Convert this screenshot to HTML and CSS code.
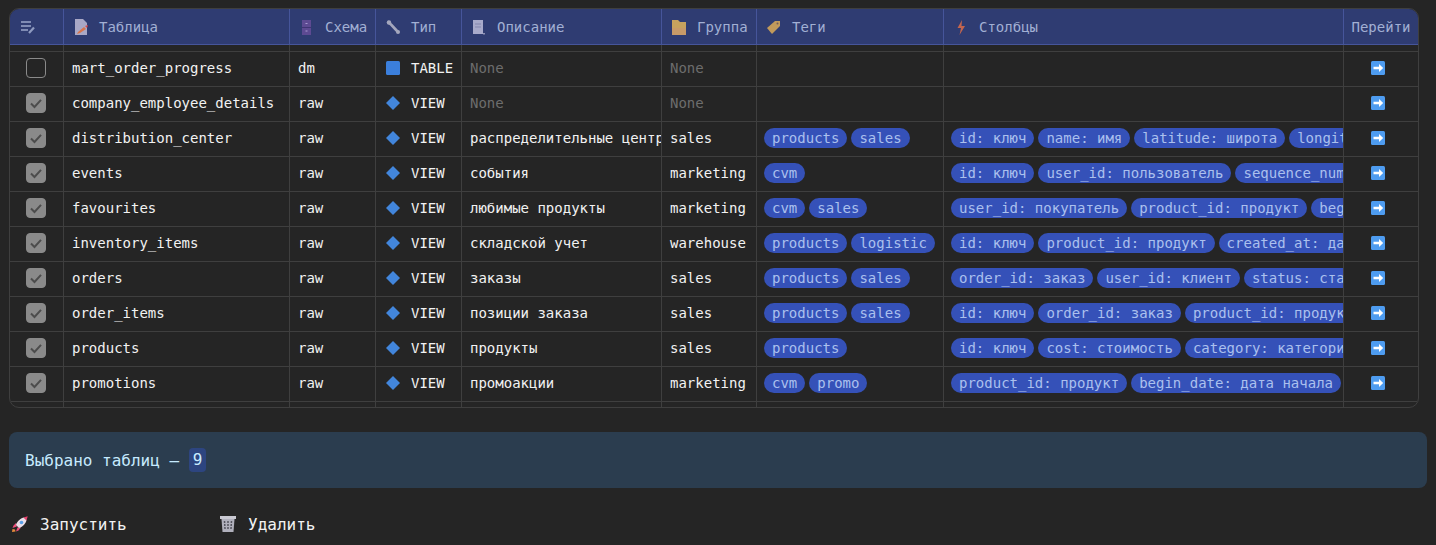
FILE: index.html
```html
<!DOCTYPE html>
<html lang="ru">
<head>
<meta charset="utf-8">
<title>Таблицы</title>
<link rel="stylesheet" href="styles.css">
</head>
<body>
<svg class="sprite" aria-hidden="true">
  <symbol id="i-table" viewBox="0 0 14 14"><rect width="14" height="14" rx="1.5" fill="#3b7fdc"/></symbol>
  <symbol id="i-view" viewBox="0 0 14 14"><path d="M7 0 14 7 7 14 0 7Z" fill="#4286dc"/></symbol>
  <symbol id="i-go" viewBox="0 0 14 14"><rect width="14" height="14" rx="1.5" fill="#4e9cf0"/><path d="M2.500 5.800h5.500V3l4.200 4-4.200 4V8.200H2.500Z" fill="#fff"/></symbol>
  <symbol id="i-check" viewBox="0 0 20 20"><path d="M5 10.500 8.500 14 15 6.800" fill="none" stroke="#4c4c4c" stroke-width="2"/></symbol>
</svg>
<main class="page">
  <section class="table">
    <div class="row head">
      <div class="cell"><svg class="ic-list" width="16" height="14" viewBox="0 0 16 14"><path d="M1 2h10M1 6h10M1 10h7" stroke="#7f8bb4" stroke-width="2"/><path d="M9 13l5-5.500" stroke="#8f9bc0" stroke-width="2.200"/></svg></div>
      <div class="cell"><svg class="ic" viewBox="0 0 27 18"><path d="M3 1h8l4 4v12H3Z" fill="#a9a8c6"/><path d="M6 14l6-5 2 2-6 4-3 1Z" fill="#d9754c"/><path d="M13 8l3-1-1 3Z" fill="#d84a4a"/></svg>Таблица</div>
      <div class="cell"><svg class="ic" viewBox="0 0 27 18"><rect x="4" y="2" width="9" height="15" fill="#5d4a92"/><path d="M4 9.500h9" stroke="#3f3473"/><path d="M7.500 5.500h2M7.500 13h2" stroke="#a99bd0"/></svg>Схема</div>
      <div class="cell"><svg class="ic" viewBox="0 0 27 18"><path d="M3.500 3.500l4 3.500 6 6.500" stroke="#a4a7bd" stroke-width="2.600" fill="none"/><circle cx="5" cy="4.500" r="2.200" fill="#a4a7bd"/><circle cx="14" cy="14" r="2" fill="#a4a7bd"/></svg>Тип</div>
      <div class="cell"><svg class="ic" viewBox="0 0 27 18"><path d="M3 2h10v14h-10Z" fill="#a8aacb"/><path d="M13 15h2v1.500h-2Z" fill="#8d90b4"/><path d="M5 6h6M5 9h6" stroke="#8386ad"/></svg>Описание</div>
      <div class="cell"><svg class="ic" viewBox="0 0 27 18"><path d="M2 2h6l2 2h6v13H2Z" fill="#c6a25e"/><path d="M2 10h14v7H2Z" fill="#c79a68"/></svg>Группа</div>
      <div class="cell"><svg class="ic" viewBox="0 0 27 18"><path d="M2 10 10 3h5v5l-8 8Z" fill="#c29a5b"/><circle cx="12.500" cy="5.500" r="1" fill="#6f5a5e"/></svg>Теги</div>
      <div class="cell"><svg class="ic" viewBox="0 0 27 18"><path d="M10 2 5.500 10H9l-1.500 7L13 8H9.500Z" fill="#c2654f"/></svg>Столбцы</div>
      <div class="cell last center">Перейти</div>
    </div>
    <div class="row spacer">
      <div class="cell"></div><div class="cell"></div><div class="cell"></div><div class="cell"></div><div class="cell"></div><div class="cell"></div><div class="cell"></div><div class="cell"></div><div class="cell last"></div>
    </div>

    <div class="row">
      <div class="cell center"><span class="box"></span></div>
      <div class="cell">mart_order_progress</div>
      <div class="cell">dm</div>
      <div class="cell"><svg class="kind"><use href="#i-table"/></svg>TABLE</div>
      <div class="cell none">None</div>
      <div class="cell none">None</div>
      <div class="cell"></div>
      <div class="cell"></div>
      <div class="cell last"><svg class="go"><use href="#i-go"/></svg></div>
    </div>
    <div class="row">
      <div class="cell center"><span class="box on"><svg class="tick"><use href="#i-check"/></svg></span></div>
      <div class="cell">company_employee_details</div>
      <div class="cell">raw</div>
      <div class="cell"><svg class="kind"><use href="#i-view"/></svg>VIEW</div>
      <div class="cell none">None</div>
      <div class="cell none">None</div>
      <div class="cell"></div>
      <div class="cell"></div>
      <div class="cell last"><svg class="go"><use href="#i-go"/></svg></div>
    </div>
    <div class="row">
      <div class="cell center"><span class="box on"><svg class="tick"><use href="#i-check"/></svg></span></div>
      <div class="cell">distribution_center</div>
      <div class="cell">raw</div>
      <div class="cell"><svg class="kind"><use href="#i-view"/></svg>VIEW</div>
      <div class="cell">распределительные центры</div>
      <div class="cell">sales</div>
      <div class="cell"><span class="tag">products</span><span class="tag">sales</span></div>
      <div class="cell"><span class="tag">id: ключ</span><span class="tag">name: имя</span><span class="tag">latitude: широта</span><span class="tag">longitude: долгота</span></div>
      <div class="cell last"><svg class="go"><use href="#i-go"/></svg></div>
    </div>
    <div class="row">
      <div class="cell center"><span class="box on"><svg class="tick"><use href="#i-check"/></svg></span></div>
      <div class="cell">events</div>
      <div class="cell">raw</div>
      <div class="cell"><svg class="kind"><use href="#i-view"/></svg>VIEW</div>
      <div class="cell">события</div>
      <div class="cell">marketing</div>
      <div class="cell"><span class="tag">cvm</span></div>
      <div class="cell"><span class="tag">id: ключ</span><span class="tag">user_id: пользователь</span><span class="tag">sequence_number: номер</span></div>
      <div class="cell last"><svg class="go"><use href="#i-go"/></svg></div>
    </div>
    <div class="row">
      <div class="cell center"><span class="box on"><svg class="tick"><use href="#i-check"/></svg></span></div>
      <div class="cell">favourites</div>
      <div class="cell">raw</div>
      <div class="cell"><svg class="kind"><use href="#i-view"/></svg>VIEW</div>
      <div class="cell">любимые продукты</div>
      <div class="cell">marketing</div>
      <div class="cell"><span class="tag">cvm</span><span class="tag">sales</span></div>
      <div class="cell"><span class="tag">user_id: покупатель</span><span class="tag">product_id: продукт</span><span class="tag">begin_date: дата</span></div>
      <div class="cell last"><svg class="go"><use href="#i-go"/></svg></div>
    </div>
    <div class="row">
      <div class="cell center"><span class="box on"><svg class="tick"><use href="#i-check"/></svg></span></div>
      <div class="cell">inventory_items</div>
      <div class="cell">raw</div>
      <div class="cell"><svg class="kind"><use href="#i-view"/></svg>VIEW</div>
      <div class="cell">складской учет</div>
      <div class="cell">warehouse</div>
      <div class="cell"><span class="tag">products</span><span class="tag">logistic</span></div>
      <div class="cell"><span class="tag">id: ключ</span><span class="tag">product_id: продукт</span><span class="tag">created_at: дата</span></div>
      <div class="cell last"><svg class="go"><use href="#i-go"/></svg></div>
    </div>
    <div class="row">
      <div class="cell center"><span class="box on"><svg class="tick"><use href="#i-check"/></svg></span></div>
      <div class="cell">orders</div>
      <div class="cell">raw</div>
      <div class="cell"><svg class="kind"><use href="#i-view"/></svg>VIEW</div>
      <div class="cell">заказы</div>
      <div class="cell">sales</div>
      <div class="cell"><span class="tag">products</span><span class="tag">sales</span></div>
      <div class="cell"><span class="tag">order_id: заказ</span><span class="tag">user_id: клиент</span><span class="tag">status: статус</span></div>
      <div class="cell last"><svg class="go"><use href="#i-go"/></svg></div>
    </div>
    <div class="row">
      <div class="cell center"><span class="box on"><svg class="tick"><use href="#i-check"/></svg></span></div>
      <div class="cell">order_items</div>
      <div class="cell">raw</div>
      <div class="cell"><svg class="kind"><use href="#i-view"/></svg>VIEW</div>
      <div class="cell">позиции заказа</div>
      <div class="cell">sales</div>
      <div class="cell"><span class="tag">products</span><span class="tag">sales</span></div>
      <div class="cell"><span class="tag">id: ключ</span><span class="tag">order_id: заказ</span><span class="tag">product_id: продукт</span></div>
      <div class="cell last"><svg class="go"><use href="#i-go"/></svg></div>
    </div>
    <div class="row">
      <div class="cell center"><span class="box on"><svg class="tick"><use href="#i-check"/></svg></span></div>
      <div class="cell">products</div>
      <div class="cell">raw</div>
      <div class="cell"><svg class="kind"><use href="#i-view"/></svg>VIEW</div>
      <div class="cell">продукты</div>
      <div class="cell">sales</div>
      <div class="cell"><span class="tag">products</span></div>
      <div class="cell"><span class="tag">id: ключ</span><span class="tag">cost: стоимость</span><span class="tag">category: категория</span></div>
      <div class="cell last"><svg class="go"><use href="#i-go"/></svg></div>
    </div>
    <div class="row">
      <div class="cell center"><span class="box on"><svg class="tick"><use href="#i-check"/></svg></span></div>
      <div class="cell">promotions</div>
      <div class="cell">raw</div>
      <div class="cell"><svg class="kind"><use href="#i-view"/></svg>VIEW</div>
      <div class="cell">промоакции</div>
      <div class="cell">marketing</div>
      <div class="cell"><span class="tag">cvm</span><span class="tag">promo</span></div>
      <div class="cell"><span class="tag">product_id: продукт</span><span class="tag">begin_date: дата начала</span></div>
      <div class="cell last"><svg class="go"><use href="#i-go"/></svg></div>
    </div>
    <div class="row spacer tail">
      <div class="cell"></div><div class="cell"></div><div class="cell"></div><div class="cell"></div><div class="cell"></div><div class="cell"></div><div class="cell"></div><div class="cell"></div><div class="cell last"></div>
    </div>
  </section>

  <section class="info">Выбрано таблиц – <span class="count">9</span></section>

  <section class="actions">
    <button class="btn run" type="button">
      <svg class="btn-ic" viewBox="0 0 18 18"><path d="M5 8L2.500 10.500 1.500 13 5.800 11.500ZM10 12.500 7.500 15.500 5 16.500 6.500 12.500Z" fill="#f0507c"/><path d="M5 10C6 6 10 3 13 2.500L15.500 5C15 8 12 12 8 13Z" fill="#eadfe8"/><path d="M12.500 2.600 16.700 1.300 15.500 5.500Z" fill="#e8436e"/><circle cx="10.500" cy="7.500" r="1.800" fill="#5ba0e8"/><path d="M1.500 14 4 14.500 4.500 16.500 1 17Z" fill="#e78a3c"/></svg>
      <span>Запустить</span>
    </button>
    <button class="btn" type="button">
      <svg class="btn-ic" viewBox="0 0 18 18"><path d="M2.500 4h13l-1 13h-11Z" fill="#b0b0bc"/><path d="M5.500 6l.6 9M9 6v9M12.500 6l-.6 9" stroke="#55555f" stroke-width="1.500" stroke-dasharray="2 1"/><path d="M1 1h16v3H1Z" fill="#c9c9d2"/></svg>
      <span>Удалить</span>
    </button>
  </section>
</main>
</body>
</html>
```
FILE: styles.css
```css
* { box-sizing: border-box; }
html, body { margin: 0; height: 100%; overflow: hidden; }
body {
  background: #252525;
  color: #f2f2f2;
  font-family: "DejaVu Sans Mono", "Liberation Mono", monospace;
  font-size: 14px;
}
.sprite { display: none; }
.page { padding: 8px 9px; }

.table {
  width: 1410px;
  border: 1px solid #3f3f3f;
  border-radius: 10px;
  overflow: hidden;
}
.row {
  display: grid;
  grid-template-columns: 54px 226px 86px 86px 200px 95px 187px 400px 74px;
  height: 35px;
  border-bottom: 1px solid #3f3f3f;
}
.cell {
  display: flex;
  align-items: center;
  gap: 4px;
  min-width: 0;
  padding: 0 0 2px 8px;
  border-right: 1px solid #3f3f3f;
  overflow: hidden;
  white-space: nowrap;
}
.cell.last { border-right: 0; padding-left: 27px; }
.cell.center { justify-content: center; padding: 0 1px 2px 0; }

.head {
  height: 36px;
  background: #2f3c72;
  color: #a2b0d4;
  border-bottom-color: #46559a;
}
.head .cell { gap: 0; padding-bottom: 0; border-right-color: #46559a; }
.head .cell.last { padding: 0; }
.ic { flex: none; width: 27px; height: 18px; }
.ic-list { flex: none; margin-left: 2px; }

.spacer { height: 7px; }
.tail { height: 5px; border-bottom: 0; }
.spacer .cell { padding: 0; }

.none { color: #6d6d6d; }
.kind { flex: none; width: 14px; height: 14px; margin: 0 7px 0 2px; }
.go { flex: none; width: 14px; height: 14px; }

.box {
  display: block;
  width: 20px;
  height: 20px;
  border: 1px solid #8a8a8a;
  border-radius: 4px;
}
.box.on { background: #8a8a8a; }
.tick { display: block; width: 20px; height: 20px; margin: -1px; }

.tag {
  flex: none;
  height: 20px;
  line-height: 20px;
  padding: 0 8px;
  border-radius: 10px;
  background: #3551b8;
  color: #abc0ee;
}
.tag:first-child { margin-left: -1px; }

.info {
  display: flex;
  align-items: center;
  width: 1418px;
  height: 56px;
  margin-top: 24px;
  padding: 0 16px;
  border-radius: 8px;
  background: #2b3d4f;
  color: #c7ebff;
  font-size: 16px;
  white-space: pre;
}
.count {
  height: 24px;
  line-height: 24px;
  padding: 0 4px;
  border-radius: 4px;
  background: #2d4580;
}

.actions {
  display: flex;
  margin-top: 24px;
}
.btn {
  display: flex;
  align-items: center;
  width: 208px;
  height: 24px;
  padding: 0 0 0 2px;
  border: 0;
  background: none;
  color: #f2f2f2;
  font: inherit;
  font-size: 16px;
}
.btn-ic { flex: none; width: 18px; height: 18px; margin-right: 11px; }
```
